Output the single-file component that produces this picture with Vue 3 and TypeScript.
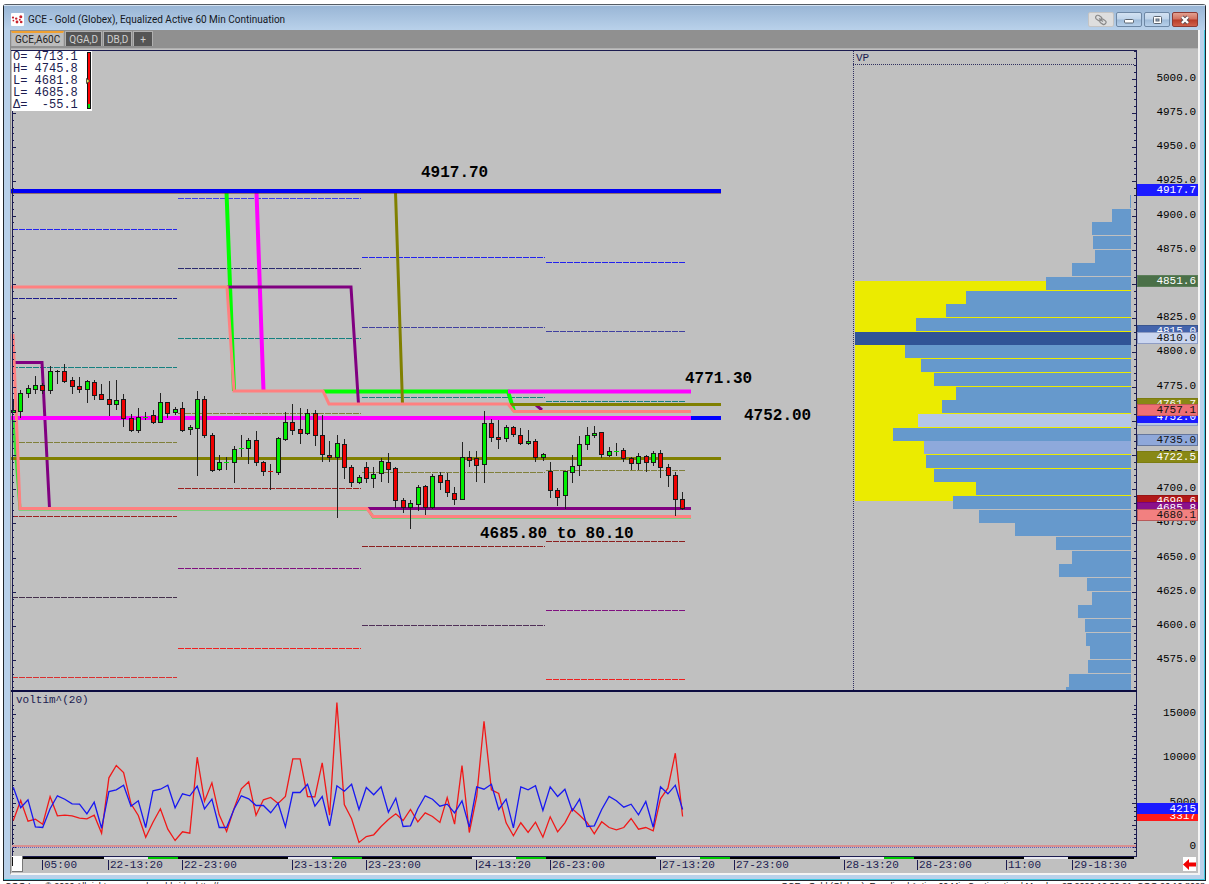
<script setup lang="ts">
type Candle = [kind: 'g' | 'r' | 'k', top: number, bottom: number, high: number, low: number]

const STEP = 7.355
const barX = (i: number): number => Math.round(13 + i * STEP)
const priceY = (price: number): number => Math.round(78.7 + (5000 - price) * 1.368)

const candles: Candle[] = [
  ['g', 410, 412, 399, 412], ['g', 393, 411, 390, 417], ['g', 388, 393, 385, 397], ['g', 385, 389, 376, 393],
  ['r', 385, 390, 383, 393], ['g', 371, 390, 366, 393], ['k', 371, 371, 370, 383], ['r', 371, 381, 364, 382],
  ['r', 380, 386, 377, 393], ['r', 386, 389, 377, 392], ['g', 381, 389, 380, 402], ['r', 382, 395, 380, 399],
  ['r', 394, 399, 384, 399], ['r', 399, 404, 381, 415], ['g', 400, 404, 380, 409], ['r', 399, 418, 394, 426],
  ['r', 418, 430, 414, 431], ['g', 417, 430, 408, 432], ['g', 417, 417, 412, 419], ['r', 415, 422, 410, 423],
  ['g', 402, 422, 393, 422], ['r', 402, 413, 402, 417], ['g', 409, 412, 407, 414], ['r', 408, 430, 402, 431],
  ['g', 427, 429, 425, 434], ['g', 399, 428, 391, 475], ['r', 399, 435, 396, 437], ['r', 435, 470, 433, 471],
  ['g', 462, 469, 455, 470], ['g', 462, 462, 457, 469], ['g', 449, 462, 446, 482], ['g', 448, 448, 435, 456],
  ['g', 440, 448, 438, 463], ['r', 440, 462, 431, 465], ['r', 462, 471, 461, 475], ['r', 471, 471, 464, 489],
  ['g', 438, 472, 437, 474], ['g', 422, 439, 412, 440], ['r', 422, 430, 404, 434], ['r', 429, 433, 408, 443],
  ['g', 413, 433, 409, 434], ['r', 413, 435, 410, 445], ['r', 435, 454, 415, 461], ['r', 455, 457, 441, 461],
  ['g', 443, 457, 435, 517], ['r', 444, 467, 439, 478], ['r', 467, 482, 465, 486], ['g', 477, 482, 475, 483],
  ['r', 467, 478, 462, 482], ['g', 474, 478, 467, 487], ['g', 461, 473, 458, 481], ['r', 462, 469, 453, 482],
  ['r', 468, 500, 467, 507], ['r', 500, 507, 498, 512], ['g', 503, 507, 500, 528], ['g', 487, 504, 485, 510],
  ['r', 486, 507, 485, 514], ['g', 476, 507, 474, 508], ['r', 475, 482, 472, 489], ['r', 480, 492, 473, 496],
  ['r', 493, 499, 487, 504], ['g', 457, 499, 442, 499], ['r', 457, 460, 451, 466], ['r', 458, 465, 451, 481],
  ['g', 423, 464, 411, 482], ['r', 423, 437, 419, 441], ['r', 437, 439, 420, 448], ['g', 427, 438, 425, 441],
  ['r', 427, 434, 426, 436], ['r', 435, 443, 428, 444], ['g', 441, 443, 430, 444], ['r', 441, 457, 439, 461],
  ['g', 454, 457, 453, 460], ['r', 471, 490, 462, 497], ['r', 490, 497, 488, 505], ['g', 471, 495, 471, 508],
  ['g', 466, 472, 455, 482], ['g', 444, 465, 436, 475], ['g', 435, 444, 427, 449], ['g', 433, 435, 426, 437],
  ['r', 432, 454, 432, 457], ['g', 451, 455, 447, 456], ['g', 451, 451, 443, 455], ['r', 450, 458, 448, 461],
  ['r', 458, 463, 457, 469], ['g', 456, 463, 453, 469], ['r', 456, 462, 455, 471], ['g', 453, 462, 451, 465],
  ['r', 453, 467, 450, 477], ['r', 467, 475, 464, 486], ['r', 475, 499, 472, 515], ['r', 499, 508, 492, 509],
]

const volumeLevels: number[] = [
  420, 360, 422, 416, 431, 348, 406, 404, 406, 413, 415, 404, 458, 292, 255, 276, 370, 405, 470, 425, 385, 446, 480,
  454, 458, 230, 362, 307, 403, 453, 385, 325, 304, 404, 358, 351, 369, 348, 235, 235, 348, 349, 247, 404, 66, 372,
  415, 486, 468, 463, 438, 417, 400, 420, 387, 424, 397, 408, 426, 351, 431, 255, 456, 348, 122, 328, 339, 427, 466,
  427, 456, 425, 470, 409, 454, 427, 385, 404, 426, 460, 424, 441, 448, 441, 414, 446, 441, 451, 355, 323, 218, 408,
]
const averageLevels: number[] = [
  320, 382, 358, 439, 441, 385, 346, 356, 370, 371, 400, 365, 443, 333, 328, 314, 377, 361, 441, 331, 326, 314, 382,
  340, 346, 317, 385, 356, 441, 441, 386, 346, 355, 375, 375, 397, 368, 439, 336, 336, 311, 377, 348, 436, 316, 332,
  311, 387, 321, 343, 319, 395, 353, 438, 436, 385, 346, 356, 377, 371, 397, 361, 440, 319, 326, 311, 387, 356, 442,
  319, 328, 316, 390, 319, 348, 326, 391, 356, 438, 436, 387, 348, 361, 380, 371, 403, 363, 440, 319, 340, 314, 387,
]
const toPoints = (levels: number[]): string =>
  levels.map((v, i) => `${(13.3 + i * STEP).toFixed(1)},${(680.5 + v / 3).toFixed(1)}`).join(' ')

const profileLeft: number[] = [
  1130, 1112, 1092, 1093, 1095, 1072, 1046, 966, 946, 916, 855, 905, 921, 934, 956, 942, 918, 893, 924, 926, 934, 976,
  953, 979, 1015, 1056, 1072, 1059, 1087, 1092, 1078, 1085, 1086, 1090, 1088, 1069, 1066,
]
const profileFill = (k: number): string =>
  k === 10 ? '#305496' : k === 16 ? '#b4c6e7' : k === 18 ? '#8ea9db' : '#6699cc'
const profile = profileLeft.map((x, k) => {
  const y = Math.round(195 + k * 13.68)
  return { x, y, h: Math.min(13, 690 - y), fill: profileFill(k) }
})

const priceLabels = Array.from({ length: 18 }, (_, i) => 5000 - i * 25)
const priceTicks = Array.from({ length: 94 }, (_, i) => 5020 - i * 5).map((p) => ({
  y: priceY(p),
  major: p % 25 === 0,
}))
const volumeTicks = Array.from({ length: 34 }, (_, i) => (i - 1) * 500).map((v) => ({
  y: Math.round(847 - v * 0.0089),
  len: v % 2500 === 0 ? 4 : 2,
}))

interface Tag { price: number; fill: string; edge: string; ink: string }
const tags: Tag[] = [
  { price: 4917.7, fill: '#1a1aff', edge: '#1a1aff', ink: '#fff' },
  { price: 4851.6, fill: '#4a7048', edge: '#5c7f5a', ink: '#fff' },
  { price: 4815.0, fill: '#4464ac', edge: '#3a5690', ink: '#fff' },
  { price: 4810.0, fill: '#cbd6f0', edge: '#8e9cc4', ink: '#111' },
  { price: 4761.7, fill: '#888815', edge: '#7c7c10', ink: '#fff' },
  { price: 4750.0, fill: '#b4c6e7', edge: '#8e9cc4', ink: '#111' },
  { price: 4752.0, fill: '#1a1aff', edge: '#1a1aff', ink: '#fff' },
  { price: 4757.1, fill: '#ee6f74', edge: '#c05a5a', ink: '#111' },
  { price: 4735.0, fill: '#8fa8da', edge: '#66779c', ink: '#111' },
  { price: 4722.5, fill: '#888815', edge: '#7c7c10', ink: '#fff' },
  { price: 4690.6, fill: '#b01818', edge: '#981414', ink: '#fff' },
  { price: 4685.8, fill: '#8a108a', edge: '#7a007a', ink: '#fff' },
  { price: 4680.1, fill: '#f28080', edge: '#b85a5a', ink: '#111' },
]

const pivots: [x1: number, x2: number, y: number, color: string][] = [
  [12, 177, 229, '#2222ee'], [12, 177, 298, '#1c1c8c'], [12, 177, 367, '#148080'], [12, 177, 442, '#80803a'],
  [12, 177, 516, '#9c2020'], [12, 177, 597, '#44304c'], [12, 177, 677, '#d83030'],
  [178, 361, 198, '#3a3aee'], [178, 361, 268, '#2c2c70'], [178, 361, 338, '#148080'], [178, 361, 413, '#80803a'],
  [178, 361, 488, '#9c2020'], [178, 361, 568, '#801080'], [178, 361, 648, '#f02020'],
  [362, 545, 257, '#2222ee'], [362, 545, 327, '#4040a0'], [362, 545, 397, '#148080'], [362, 545, 472, '#80803a'],
  [362, 545, 546, '#8c2020'], [362, 545, 625, '#503058'],
  [546, 685, 262, '#2222ee'], [546, 685, 331, '#4040a0'], [546, 685, 401, '#148080'], [546, 685, 470, '#80803a'],
  [546, 685, 541, '#8c2020'], [546, 685, 610, '#801080'], [546, 685, 679, '#f02020'],
]

const timeMarks: [x: number, label: string][] = [
  [42, '05:00'], [108, '22-13:20'], [182, '22-23:00'], [292, '23-13:20'], [366, '23-23:00'], [476, '24-13:20'],
  [550, '26-23:00'], [660, '27-13:20'], [734, '27-23:00'], [844, '28-13:20'], [917, '28-23:00'], [1006, '11:00'],
  [1072, '29-18:30'],
]
const sessions = [104, 288, 472, 656, 840, 1024]

const quote = ['O= 4713.1', 'H= 4745.8', 'L= 4681.8', 'L= 4685.8', 'Δ=  -55.1']
const tabs = ['GCE,A60C', 'QGA,D', 'DB,D', '+']
</script>

<template>
  <div class="page">
    <main class="window">
      <header class="titlebar">
        <svg class="logo" viewBox="0 0 13 13" aria-hidden="true">
          <rect width="13" height="13" rx="1" fill="#fff" />
          <g fill="#c8202c">
            <circle cx="2" cy="4.600" r="1.100" /><circle cx="5.200" cy="5.600" r="1.200" /><circle cx="9.800" cy="3.800" r="1.500" />
            <circle cx="2.400" cy="7.600" r="0.900" /><circle cx="6" cy="9" r="1.400" /><circle cx="8.800" cy="6.800" r="1" />
            <circle cx="10.200" cy="9" r="1.300" />
          </g>
        </svg>
        <h1>GCE - Gold (Globex), Equalized Active 60 Min Continuation</h1>
        <div class="controls">
          <button type="button" class="link" aria-label="Link window">
            <svg viewBox="0 0 14 12"><g fill="none" stroke="#8a8a8a" stroke-width="1.2"><rect x="1.5" y="2" width="6.5" height="4.4" rx="2.2" transform="rotate(32 5 4)" /><rect x="5.5" y="5.6" width="6.5" height="4.4" rx="2.2" transform="rotate(32 9 8)" /><path d="M5 4.4l4 3" /></g></svg>
          </button>
          <button type="button" aria-label="Minimize">
            <svg viewBox="0 0 14 12"><rect x="2.5" y="5.5" width="9" height="3.5" rx="1" fill="#fff" stroke="#5a6470" /></svg>
          </button>
          <button type="button" aria-label="Maximize">
            <svg viewBox="0 0 14 12"><rect x="3.5" y="2.5" width="8" height="7" rx="1" fill="#fff" stroke="#5a6470" /><rect x="6" y="5" width="3" height="2" fill="#9fb8d4" stroke="#5a6470" /></svg>
          </button>
          <button type="button" class="close" aria-label="Close">
            <svg viewBox="0 0 14 12"><path d="M4 3l6 6M10 3l-6 6" stroke="#5c4a50" stroke-width="4" /><path d="M4 3l6 6M10 3l-6 6" stroke="#fff" stroke-width="2.4" /></svg>
          </button>
        </div>
      </header>

      <div class="client">
        <nav class="tabs">
          <button v-for="(tab, i) in tabs" :key="tab" type="button" :class="{ active: i === 0 }">{{ tab }}</button>
        </nav>

        <svg class="pane" viewBox="11 49 1187 643" role="img" aria-label="Gold price chart">
          <g class="crisp">
            <rect x="855" y="281" width="276" height="220" fill="#ebeb00" />
            <rect v-for="(b, k) in profile" :key="k" :x="b.x" :y="b.y" :width="1131 - b.x" :height="b.h" :fill="b.fill" />
            <path d="M853.5 51V690" class="dotted" />
            <path d="M853 64.5H1135" class="dotted" />
            <line
              v-for="(p, i) in pivots" :key="i" :x1="p[0]" :x2="p[1]" :y1="p[2] + 0.5" :y2="p[2] + 0.5"
              :stroke="p[3]" stroke-dasharray="6 1"
            />
          </g>

          <g fill="none" stroke-width="4">
            <path d="M15 362.5H42L49.500 508" stroke="#800080" stroke-width="3" />
            <path d="M13 418L20 509H368L373 517H691" stroke="#3ade3a" stroke-width="3" />
            <path d="M226.500 192L234 391M323 391.500H508L514 411" stroke="#00ff00" />
            <path d="M256.500 192L263.500 391M508 391.500H691" stroke="#ff00ff" />
            <path d="M227 287H351L358.500 404M367 508.500H691M536 405L542 410" stroke="#800080" stroke-width="3" />
            <path d="M395.500 192L402.500 404M510 404.500H721M11 458.500H721" stroke="#808000" stroke-width="3" />
            <path d="M11 418H691" stroke="#ff00ff" />
            <path d="M691 418H721" stroke="#0000ff" />
            <path d="M11 287H227L234 391H323L329 404H508L514 411.500H691" stroke="#ff8080" stroke-width="3" />
            <path d="M13 334L20 508.500H367L373 516.500H691" stroke="#ff8080" stroke-width="3" />
            <path d="M11 191.500H721" stroke="#602020" />
            <path d="M11 191H721" stroke="#0000f4" />
          </g>

          <g class="crisp">
            <g v-for="(c, i) in candles" :key="i">
              <rect :x="barX(i)" :y="c[3]" width="1" :height="c[4] - c[3] + 1" fill="#222" />
              <rect
                v-if="c[1] === c[2]" :x="barX(i) - 2" :y="c[1]" width="5" height="1"
                :fill="c[0] === 'g' ? '#00e000' : c[0] === 'r' ? '#e00000' : '#111'"
              />
              <rect
                v-else :x="barX(i) - 1.5" :y="c[1] + 0.5" width="4" :height="Math.max(c[2] - c[1], 2)"
                :fill="c[0] === 'g' ? '#00ee00' : '#ee0000'" stroke="#1a1a1a"
              />
            </g>
            <path d="M11 50.500H1137" stroke="#1c1c50" stroke-width="1" />
            <path d="M12.500 50V692M1136.500 50V692" stroke="#1c1c50" />
            <g v-for="(t, i) in priceTicks" :key="i" fill="#1c1c50">
              <rect x="12" :y="t.y" :width="t.major ? 4 : 2" height="1" />
              <rect :x="t.major ? 1132 : 1134" :y="t.y" :width="t.major ? 4 : 2" height="1" />
            </g>
            <rect x="11" y="690" width="1126" height="2" fill="#0c0c40" />
            <rect x="12" y="51" width="80" height="60" fill="#fff" />
            <rect x="87" y="52" width="4" height="57" fill="#111" />
            <rect x="88" y="53" width="2" height="51" fill="#f00" />
            <rect x="88" y="104" width="2" height="4" fill="#0d0" />
          </g>
          <path d="M86.500 78.500l3.500 2.500-3.500 2.500z" fill="#e8e060" stroke="#333" stroke-width="0.800" />

          <text v-for="(q, i) in quote" :key="i" class="quote" x="13" :y="60 + i * 12">{{ q }}</text>
          <text class="label navy" x="856" y="61">VP</text>

          <text class="note" x="421" y="177">4917.70</text>
          <text class="note" x="685" y="383">4771.30</text>
          <text class="note" x="744" y="420">4752.00</text>
          <text class="note" x="480" y="538">4685.80 to 80.10</text>

          <text v-for="p in priceLabels" :key="p" class="label" x="1196" :y="priceY(p) + 2" text-anchor="end">{{ p.toFixed(1) }}</text>
          <g v-for="t in tags" :key="t.price">
            <rect class="crisp" x="1137.500" :y="priceY(t.price) - 6.5" width="60" height="11" :fill="t.fill" :stroke="t.edge" />
            <text class="label" x="1196" :y="priceY(t.price) + 2" text-anchor="end" :fill="t.ink">{{ t.price.toFixed(1) }}</text>
          </g>
        </svg>

        <svg class="pane" viewBox="11 692 1187 164" role="img" aria-label="Volume study">
          <g class="crisp">
            <path d="M12.500 692V856M1136.500 692V856" stroke="#1c1c50" />
            <g v-for="(t, i) in volumeTicks" :key="i" fill="#1c1c50">
              <rect x="12" :y="t.y" :width="t.len" height="1" />
              <rect :x="1136 - t.len" :y="t.y" :width="t.len" height="1" />
            </g>
            <rect x="12" y="845" width="1124" height="2" fill="#d89090" />
            <path d="M12 847.500H1136" stroke="#6060c0" stroke-dasharray="1 1" />
          </g>
          <polyline :points="toPoints(volumeLevels)" fill="none" stroke="#f01818" stroke-width="1.300" />
          <polyline :points="toPoints(averageLevels)" fill="none" stroke="#1818f0" stroke-width="1.300" />
          <text class="label navy" x="16" y="703">voltim^(20)</text>
          <g text-anchor="end">
            <text class="label" x="1196" y="716">15000</text>
            <text class="label" x="1196" y="760">10000</text>
            <text class="label" x="1196" y="805">5000</text>
            <text class="label" x="1196" y="849">0</text>
            <rect x="1137" y="809" width="61" height="12" fill="#ff1a1a" />
            <text class="label" x="1196" y="819" fill="#fff">3317</text>
            <rect x="1137" y="803" width="61" height="11" fill="#1a1aff" />
            <text class="label" x="1196" y="812" fill="#fff">4215</text>
          </g>
        </svg>

        <div class="timeline">
          <svg class="pane" viewBox="11 856 1187 17" role="img" aria-label="Time axis">
            <g class="crisp">
              <rect x="12" y="856" width="1125" height="1" fill="#1c1c50" />
              <rect x="22" y="857" width="1112" height="2" fill="#000" />
              <g v-for="(s, i) in sessions" :key="s">
                <rect :x="s" y="857" width="44" height="2" fill="#e8e8f0" />
                <rect v-if="i < 5" :x="s + 44" y="857" width="30" height="2" fill="#00c800" />
              </g>
              <rect v-for="m in timeMarks" :key="m[0]" :x="m[0]" y="860" width="1" height="10" fill="#1c1c50" />
              <rect x="12" y="856" width="10" height="15" fill="#fff" />
              <path d="M22.500 856V871.500H12" fill="none" stroke="#777" />
              <rect x="12" y="857" width="1" height="9" fill="#111" />
            </g>
            <text v-for="m in timeMarks" :key="m[1]" class="label navy" :x="m[0] + 2" y="868">{{ m[1] }}</text>
          </svg>
          <button type="button" class="latest" aria-label="Go to latest bar">
            <svg viewBox="0 0 13 13"><path d="M0 6.500L6 1V4.500H13V8.500H6V12z" fill="#f00000" /></svg>
          </button>
        </div>
      </div>
    </main>
    <footer class="credits">
      <span>CQG Inc. © 2026 All rights reserved worldwide. http://www.cqg.com</span>
      <span>GCE - Gold (Globex), Equalized Active 60 Min Continuation | Monday, 27 2026 10:30:21, CQG 26.10.8028</span>
    </footer>
  </div>
</template>

<style>
body {
  margin: 0;
  background: #fff;
}
</style>

<style scoped>
.page {
  padding: 4px 3px 0;
  font-family: Roboto, 'Noto Sans', sans-serif;
}
.window {
  border: 1px solid #20262c;
  border-top-color: #555c64;
  border-radius: 3px 3px 0 0;
  padding: 0 4px 4px 6px;
  background: #b9d1ea;
  box-shadow: inset -1px -1px #40c8e0;
}
.titlebar {
  display: flex;
  align-items: center;
  height: 25px;
  margin: 0 -4px 0 -6px;
  padding: 4px 7px 0;
  box-sizing: border-box;
  gap: 4px;
  background: linear-gradient(#98b5d5, #b9d1ea);
  box-shadow: inset 0 1px #d5e3f2;
}
.logo {
  width: 13px;
  height: 13px;
}
h1 {
  flex: 1;
  margin: 0;
  font-size: 10px;
  line-height: 14px;
  font-weight: 400;
  color: #14181e;
}
.controls {
  display: flex;
  gap: 2px;
}
.controls button {
  width: 26px;
  height: 15px;
  padding: 0;
  display: flex;
  align-items: center;
  justify-content: center;
  border: 1px solid #6d87a4;
  border-radius: 2px;
  background: linear-gradient(#d3e2f2 0%, #bfd4ea 48%, #9dbad8 52%, #b7d0ea 100%);
}
.controls svg {
  width: 14px;
  height: 12px;
}
.controls .link {
  border-color: #c4c4c4;
  background: #dedede;
}
.controls .close {
  border-color: #8c3a34;
  background: linear-gradient(#e2a090 0%, #d2705e 48%, #b83a26 52%, #d0604a 100%);
}
.client {
  border: solid;
  border-width: 0 2px 2px 1px;
  border-color: #b9d1ea #f4f4f4 #f4f4f4 #8c8c8c;
  margin-right: 1px;
  margin-bottom: 1px;
  background: #c0c0c0;
}
.tabs {
  display: flex;
  align-items: flex-end;
  gap: 1px;
  height: 19px;
  box-sizing: border-box;
  padding-bottom: 2px;
  background: #909090;
  border-bottom: 1px solid #b0b0b0;
}
.tabs button {
  height: 15px;
  padding: 0 3px;
  border: 1px solid #b0b0b0;
  border-bottom: 0;
  background: #555;
  color: #d0d0d0;
  font: 10px/13px Roboto, 'Noto Sans', sans-serif;
}
.tabs button:last-child {
  padding: 0 6px;
}
.tabs .active {
  border-top: 2px solid #f0a030;
  background: #bcbcbc;
  color: #222;
  line-height: 12px;
}
.pane {
  display: block;
  width: 100%;
  height: auto;
}
.crisp {
  shape-rendering: crispEdges;
}
.dotted {
  stroke: #303060;
  stroke-dasharray: 1 1;
}
text {
  font-family: 'Liberation Mono', monospace;
  white-space: pre;
}
.label {
  font-size: 11px;
}
.navy {
  fill: #1c1c50;
}
.quote {
  font-size: 12px;
  fill: #1c1c50;
}
.note {
  font-size: 16px;
  font-weight: 700;
}
.timeline {
  position: relative;
}
.latest {
  position: absolute;
  right: 2px;
  top: 1px;
  width: 13px;
  height: 14px;
  padding: 0;
  border: 0;
  background: #fff;
}
.latest svg {
  display: block;
  width: 13px;
  height: 13px;
}
.credits {
  display: flex;
  justify-content: space-between;
  height: 3px;
  overflow: hidden;
  padding: 0 1px 0 2px;
  font: 9px/10px 'Liberation Sans', Arial, sans-serif;
  color: #111;
}
</style>
